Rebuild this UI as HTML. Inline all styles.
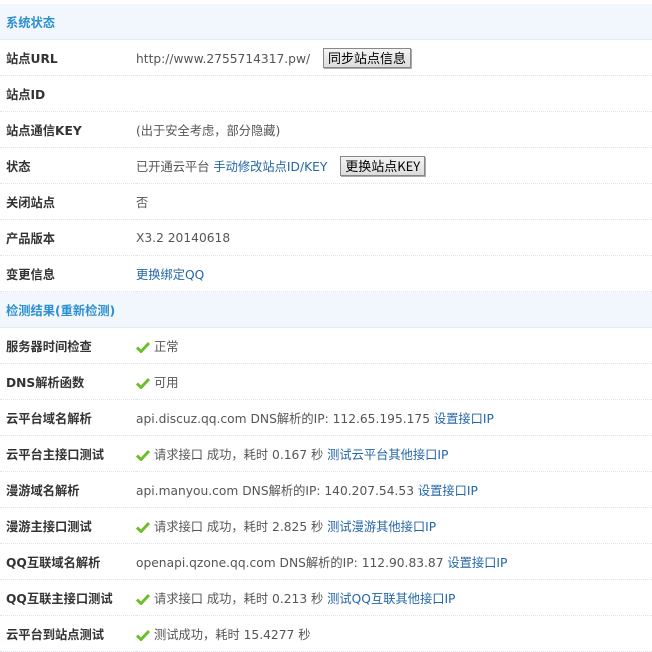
<!DOCTYPE html>
<html><head><meta charset="utf-8"><style>
body{margin:0;background:#fff;font-family:"DejaVu Sans","Noto Sans CJK SC",sans-serif;font-size:12.25px;color:#555;}
table{border-collapse:collapse;width:652px;margin-top:4px;}
td{height:35px;border-bottom:1px dotted #dbe4ee;padding:0;vertical-align:middle;}
td.l{width:130px;padding-left:6px;font-weight:bold;color:#333;}
tr.h td{background:#f1f7fd;color:#2b8fd0;font-weight:bold;padding-left:6px;border-bottom:1px solid #e4edf6;}
a{color:#2366a8;text-decoration:none;}
.b{display:inline-block;border:1px solid #888;background:linear-gradient(#f4f4f4,#dcdcdc);color:#000;padding:1px 4px;margin-left:9px;font-size:13px;line-height:16px;box-shadow:1px 1px 0 #aaa;font-family:"Noto Sans CJK SC",sans-serif;}
.ok{display:inline-block;width:14px;height:12px;vertical-align:-2px;margin-right:4px;}
</style></head><body>
<table>
<tr class="h"><td colspan="2">系统状态</td></tr>
<tr><td class="l">站点URL</td><td>http://www.2755714317.pw/ <span class="b">同步站点信息</span></td></tr>
<tr><td class="l">站点ID</td><td></td></tr>
<tr><td class="l">站点通信KEY</td><td>(出于安全考虑，部分隐藏)</td></tr>
<tr><td class="l">状态</td><td>已开通云平台 <a>手动修改站点ID/KEY</a> <span class="b">更换站点KEY</span></td></tr>
<tr><td class="l">关闭站点</td><td>否</td></tr>
<tr><td class="l">产品版本</td><td>X3.2 20140618</td></tr>
<tr><td class="l">变更信息</td><td><a>更换绑定QQ</a></td></tr>
<tr class="h"><td colspan="2">检测结果(重新检测)</td></tr>
<tr><td class="l">服务器时间检查</td><td><svg class="ok" viewBox="0 0 14 12"><path d="M1 6.5L5 10.5L13 2" stroke="#6cbf2a" stroke-width="3" fill="none"/></svg>正常</td></tr>
<tr><td class="l">DNS解析函数</td><td><svg class="ok" viewBox="0 0 14 12"><path d="M1 6.5L5 10.5L13 2" stroke="#6cbf2a" stroke-width="3" fill="none"/></svg>可用</td></tr>
<tr><td class="l">云平台域名解析</td><td>api.discuz.qq.com DNS解析的IP: 112.65.195.175 <a>设置接口IP</a></td></tr>
<tr><td class="l">云平台主接口测试</td><td><svg class="ok" viewBox="0 0 14 12"><path d="M1 6.5L5 10.5L13 2" stroke="#6cbf2a" stroke-width="3" fill="none"/></svg>请求接口 成功，耗时 0.167 秒 <a>测试云平台其他接口IP</a></td></tr>
<tr><td class="l">漫游域名解析</td><td>api.manyou.com DNS解析的IP: 140.207.54.53 <a>设置接口IP</a></td></tr>
<tr><td class="l">漫游主接口测试</td><td><svg class="ok" viewBox="0 0 14 12"><path d="M1 6.5L5 10.5L13 2" stroke="#6cbf2a" stroke-width="3" fill="none"/></svg>请求接口 成功，耗时 2.825 秒 <a>测试漫游其他接口IP</a></td></tr>
<tr><td class="l">QQ互联域名解析</td><td>openapi.qzone.qq.com DNS解析的IP: 112.90.83.87 <a>设置接口IP</a></td></tr>
<tr><td class="l">QQ互联主接口测试</td><td><svg class="ok" viewBox="0 0 14 12"><path d="M1 6.5L5 10.5L13 2" stroke="#6cbf2a" stroke-width="3" fill="none"/></svg>请求接口 成功，耗时 0.213 秒 <a>测试QQ互联其他接口IP</a></td></tr>
<tr><td class="l">云平台到站点测试</td><td><svg class="ok" viewBox="0 0 14 12"><path d="M1 6.5L5 10.5L13 2" stroke="#6cbf2a" stroke-width="3" fill="none"/></svg>测试成功，耗时 15.4277 秒</td></tr>
</table>
</body></html>
